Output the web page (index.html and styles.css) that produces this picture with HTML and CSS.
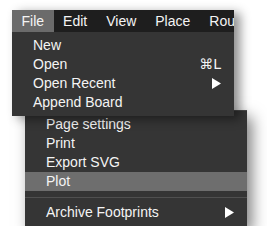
FILE: index.html
```html
<!DOCTYPE html>
<html lang="en">
<head>
  <meta charset="UTF-8" />
  <title>File menu</title>
  <link rel="stylesheet" href="styles.css">
</head>
<body>
  <div class="stage">
    <div class="menu">
      <div class="menubar">
        <span class="top-item active">File</span>
        <span class="top-item">Edit</span>
        <span class="top-item">View</span>
        <span class="top-item">Place</span>
        <span class="top-item">Route</span>
      </div>
      <div class="dropdown">
        <div class="item">New</div>
        <div class="item">Open <span class="shortcut">&#8984;L</span></div>
        <div class="item">Open Recent <svg class="arrow" width="9" height="11" viewBox="0 0 9 11"><polygon points="0,0 9,5.5 0,11" fill="#fff"/></svg></div>
        <div class="item">Append Board</div>
      </div>
    </div>

    <div class="panel">
      <div class="item">Page settings</div>
      <div class="item">Print</div>
      <div class="item">Export SVG</div>
      <div class="item selected">Plot</div>
      <div class="separator"></div>
      <div class="item">Archive Footprints <svg class="arrow" width="9" height="11" viewBox="0 0 9 11"><polygon points="0,0 9,5.5 0,11" fill="#fff"/></svg></div>
    </div>
  </div>
</body>
</html>
```

FILE: styles.css
```css
body {
  margin: 0;
  background: #fff;
  font-family: 'Liberation Sans', Arial, 'DejaVu Sans', sans-serif;
  font-size: 14px;
  color: #f4f4f4;
}
.stage {
  padding: 10px 0 0 12px;
}
.menu {
  position: relative;
  z-index: 2;
  width: 222px;
  box-shadow: 6px 3px 10px rgba(0, 0, 0, 0.45);
}
.menubar {
  display: flex;
  height: 22px;
  line-height: 22px;
  background: #1e1e1e;
  white-space: nowrap;
  overflow: hidden;
}
.top-item {
  padding: 0 9.5px;
}
.top-item.active {
  background: #6b6b6b;
}
.dropdown {
  background: #353535;
  padding: 4px 0;
}
.item {
  display: flex;
  justify-content: space-between;
  align-items: center;
  height: 19px;
  line-height: 19px;
  padding: 0 13px 0 21px;
}
.item.selected {
  background: #6e6e6e;
}
.shortcut {
  font-family: 'DejaVu Sans', 'Liberation Sans', sans-serif;
  font-size: 14px;
}
.arrow {
  display: block;
}
.panel {
  width: 222px;
  margin: -6px 0 0 13px;
  background: #353535;
  border-top: 1px solid #4c4c4c;
  padding: 4px 0;
  box-shadow: 5px 7px 14px rgba(0, 0, 0, 0.5);
}
.separator {
  margin: 6px 0 5px;
  border-top: 1px solid #505050;
}
```
